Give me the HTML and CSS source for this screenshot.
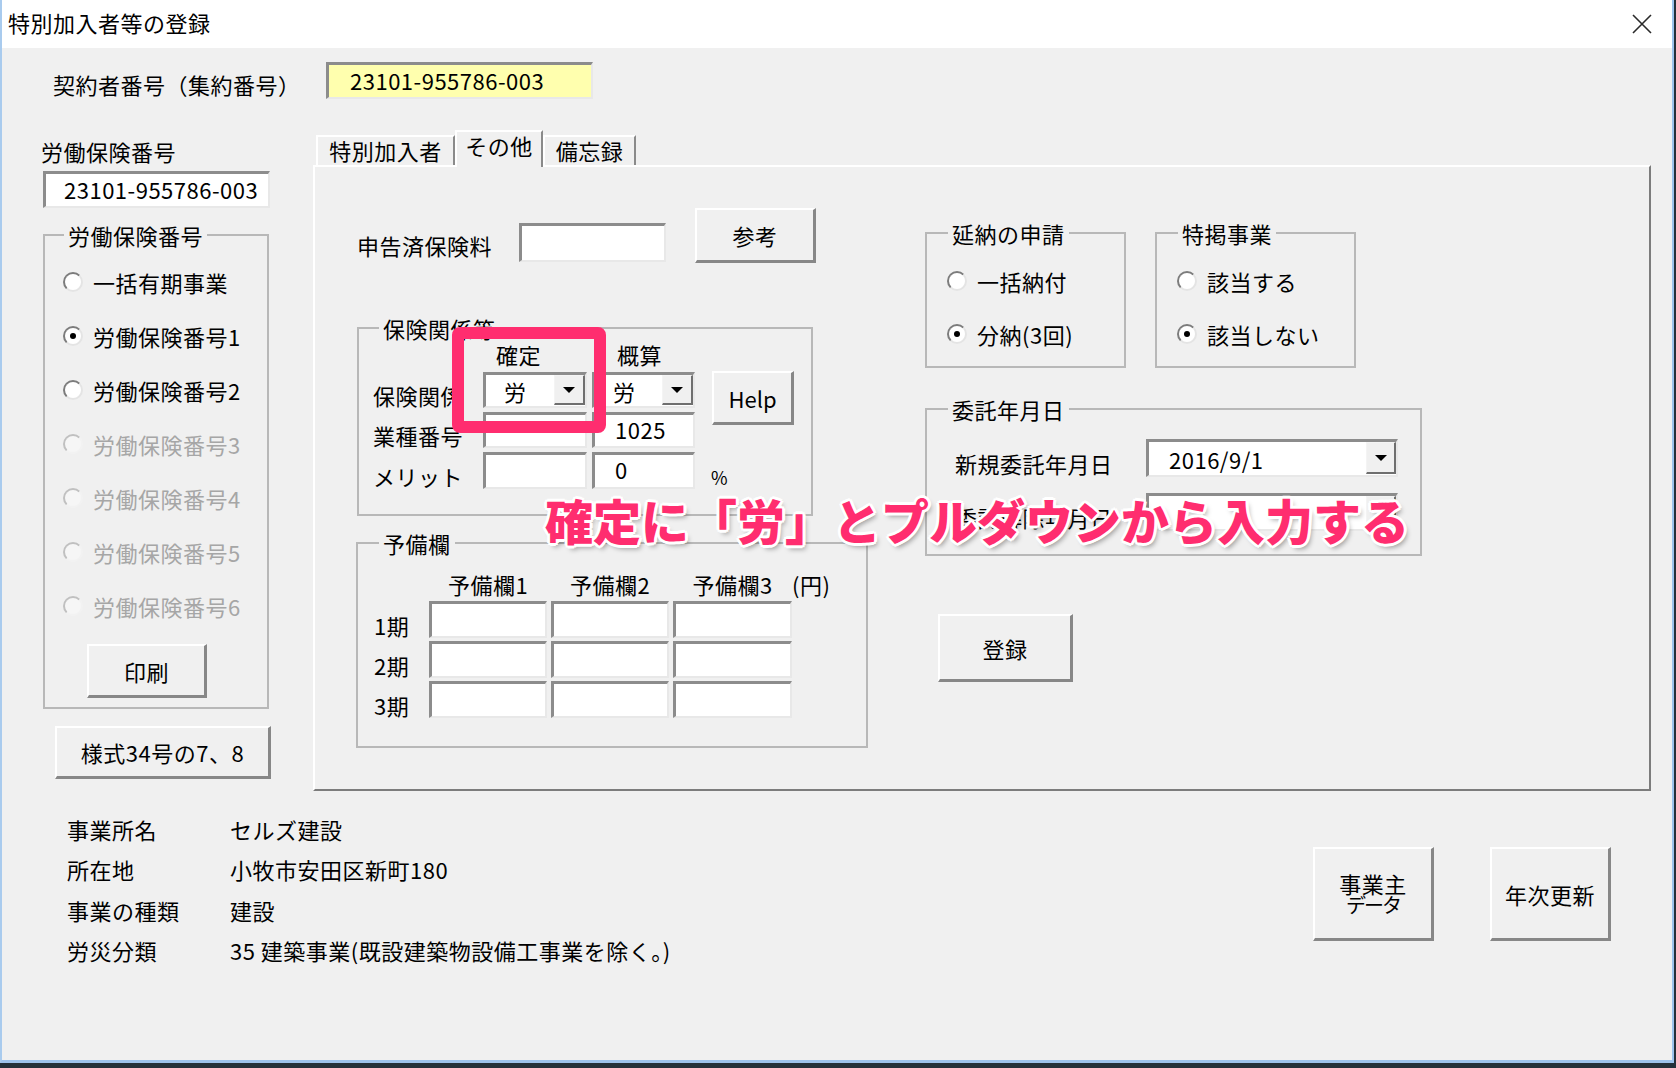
FILE: index.html
```html
<!DOCTYPE html>
<html lang="ja">
<head>
<meta charset="utf-8">
<title>特別加入者等の登録</title>
<link rel="stylesheet" href="styles.css">
</head>
<body>
<div class="window">
  <div class="titlebar">
    <span class="title">特別加入者等の登録</span>
    <svg class="close" width="20" height="20" viewBox="0 0 20 20"><path d="M1 1L19 19M19 1L1 19" stroke="#2a2a2a" stroke-width="1.6" fill="none"/></svg>
  </div>
  <div class="client">
    <div class="contract">
      <span class="contract-label">契約者番号（集約番号）</span>
      <div class="field yellow">23101-955786-003</div>
    </div>

    <div class="main">
      <div class="leftcol">
        <div class="lbl">労働保険番号</div>
        <div class="field ins-no">23101-955786-003</div>
        <fieldset class="group g-ins">
          <legend>労働保険番号</legend>
          <div class="gbody">
            <div class="radio"><span class="rb"></span><span>一括有期事業</span></div>
            <div class="radio"><span class="rb on"></span><span>労働保険番号1</span></div>
            <div class="radio"><span class="rb"></span><span>労働保険番号2</span></div>
            <div class="radio dis"><span class="rb"></span><span>労働保険番号3</span></div>
            <div class="radio dis"><span class="rb"></span><span>労働保険番号4</span></div>
            <div class="radio dis"><span class="rb"></span><span>労働保険番号5</span></div>
            <div class="radio dis"><span class="rb"></span><span>労働保険番号6</span></div>
            <div class="btn print">印刷</div>
          </div>
        </fieldset>
        <div class="btn yoshiki">様式34号の7、8</div>
      </div>

      <div class="tabs">
        <div class="tabstrip">
          <div class="tab t1">特別加入者</div>
          <div class="tab t2 active">その他</div>
          <div class="tab t3">備忘録</div>
        </div>
        <div class="panel">
          <div class="pl">
            <div class="shinkoku">
              <span class="sk-label">申告済保険料</span>
              <div class="field sk-input"></div>
              <div class="btn sk-btn">参考</div>
            </div>

            <fieldset class="group g-hoken">
              <legend>保険関係等</legend>
              <div class="gbody hk-grid">
                <div></div>
                <div class="hk-h1">確定</div>
                <div class="hk-h2">概算</div>
                <div></div>

                <div class="rowlbl">保険関係</div>
                <div class="field combo c1"><span>労</span><span class="ddb"></span></div>
                <div class="field combo c2"><span>労</span><span class="ddb"></span></div>
                <div class="btn help">Help</div>

                <div class="rowlbl">業種番号</div>
                <div class="field c1"></div>
                <div class="field c2 val">1025</div>

                <div class="rowlbl">メリット</div>
                <div class="field c1"></div>
                <div class="field c2 val">0</div>
                <div class="pct">%</div>
              </div>
            </fieldset>

            <fieldset class="group g-yobi">
              <legend>予備欄</legend>
              <div class="gbody yb-grid">
                <div></div>
                <div class="yb-h">予備欄1</div>
                <div class="yb-h">予備欄2</div>
                <div class="yb-h">予備欄3</div>
                <div class="yb-yen">(円)</div>

                <div class="rowlbl">1期</div>
                <div class="field"></div><div class="field"></div><div class="field"></div><div></div>
                <div class="rowlbl">2期</div>
                <div class="field"></div><div class="field"></div><div class="field"></div><div></div>
                <div class="rowlbl">3期</div>
                <div class="field"></div><div class="field"></div><div class="field"></div><div></div>
              </div>
            </fieldset>
          </div>

          <div class="pr">
            <div class="toprow">
              <fieldset class="group g-small">
                <legend>延納の申請</legend>
                <div class="gbody small-body">
                  <div class="radio r53"><span class="rb"></span><span>一括納付</span></div>
                  <div class="radio r53"><span class="rb on"></span><span>分納(3回)</span></div>
                </div>
              </fieldset>
              <fieldset class="group g-small">
                <legend>特掲事業</legend>
                <div class="gbody small-body">
                  <div class="radio r53"><span class="rb"></span><span>該当する</span></div>
                  <div class="radio r53"><span class="rb on"></span><span>該当しない</span></div>
                </div>
              </fieldset>
            </div>

            <fieldset class="group g-itaku">
              <legend>委託年月日</legend>
              <div class="gbody it-grid">
                <div class="rowlbl">新規委託年月日</div>
                <div class="field combo date"><span>2016/9/1</span><span class="ddb"></span></div>
                <div class="rowlbl">委託解除年月日</div>
                <div class="field combo date"><span></span><span class="ddb"></span></div>
              </div>
            </fieldset>

            <div class="btn toroku">登録</div>
          </div>
        </div>
      </div>
    </div>

    <div class="bottom">
      <div class="info">
        <div>事業所名</div><div>セルズ建設</div>
        <div>所在地</div><div>小牧市安田区新町180</div>
        <div>事業の種類</div><div>建設</div>
        <div>労災分類</div><div>35 建築事業(既設建築物設備工事業を除く。)</div>
      </div>
      <div class="bbtns">
        <div class="btn bbtn jig"><span class="l1">事業主</span><span class="l2">データ</span></div>
        <div class="btn bbtn">年次更新</div>
      </div>
    </div>
  </div>

  <div class="hl-box"></div>
  <div class="note">確定に「労」とプルダウンから入力する</div>
</div>
</body>
</html>
```

FILE: styles.css
```css
* { box-sizing: border-box; }
html, body { margin: 0; padding: 0; }
body {
  width: 1676px;
  height: 1068px;
  overflow: hidden;
  background: #24313a;
  font-family: "Noto Sans CJK JP", "Noto Sans", sans-serif;
  font-size: 22px;
  line-height: 24px;
  letter-spacing: 0.5px;
  color: #000;
}

.window {
  position: relative;
  width: 1674px;
  height: 1063px;
  border-left: 2px solid #a9cbee;
  border-right: 2px solid #9dc3ec;
  border-bottom: 3px solid #9dc3ec;
  background: #f0f0f0;
  display: flex;
  flex-direction: column;
}

.titlebar {
  flex: none;
  height: 48px;
  background: #fff;
  display: flex;
  align-items: center;
  justify-content: space-between;
  padding: 0 20px 5px 6px;
}
.close { margin-top: 4px; }

.client {
  flex: 1;
  display: flex;
  flex-direction: column;
  background: #f0f0f0;
}

/* generic controls */
.field {
  background: #fff;
  border-style: solid;
  border-width: 3px 2px 2px 3px;
  border-color: #8c8c8c #e8e8e8 #e8e8e8 #8c8c8c;
}
.btn {
  display: flex;
  align-items: center;
  justify-content: center;
  background: #f0f0f0;
  border-style: solid;
  border-width: 2px 3px 3px 2px;
  border-color: #ffffff #878787 #878787 #ffffff;
}
.group {
  margin: 0;
  padding: 0;
  min-width: 0;
  border: 2px solid #b8b8b8;
}
.group legend {
  padding: 0 4px;
  height: 24px;
  line-height: 24px;
}
.radio {
  display: flex;
  align-items: center;
  gap: 10px;
  height: 54px;
}
.radio.r53 { height: 53px; }
.rb {
  flex: none;
  width: 20px;
  height: 20px;
  border-radius: 50%;
  background: #fff;
  border: 2px solid;
  border-color: #7c7c7c #e4e4e4 #e4e4e4 #7c7c7c;
  display: flex;
  align-items: center;
  justify-content: center;
}
.rb.on::after {
  content: "";
  width: 6px;
  height: 6px;
  border-radius: 50%;
  background: #000;
}
.dis { color: #a6a6a6; }
.dis .rb {
  background: #f6f6f6;
  border-color: #c0c0c0 #f2f2f2 #f2f2f2 #c0c0c0;
}
.combo {
  display: flex;
  align-items: center;
  justify-content: space-between;
}
.ddb {
  align-self: stretch;
  width: 31px;
  margin-bottom: 1px;
  background: #f0f0f0;
  border-style: solid;
  border-width: 1px 2px 2px 1px;
  border-color: #f4f4f4 #6f6f6f #6f6f6f #f4f4f4;
  display: flex;
  align-items: center;
  justify-content: center;
}
.ddb::after {
  content: "";
  border-left: 6px solid transparent;
  border-right: 6px solid transparent;
  border-top: 6px solid #000;
}
.rowlbl {
  align-self: center;
  padding-top: 10px;
  white-space: nowrap;
}

/* contract row */
.contract {
  display: flex;
  align-items: flex-start;
  margin-top: 14px;
  padding-left: 51px;
  height: 37px;
}
.contract-label {
  width: 273px;
  padding-top: 10px;
  white-space: nowrap;
}
.yellow {
  width: 267px;
  height: 37px;
  background: #ffffae;
  padding-left: 21px;
  line-height: 30px;
}

/* main */
.main {
  display: flex;
  margin-top: 31px;
}
.leftcol {
  margin-left: 39px;
  width: 230px;
  padding-top: 9px;
}
.lbl { height: 24px; }
.ins-no {
  margin: 8px 0 0 2px;
  width: 227px;
  height: 37px;
  padding-left: 18px;
  line-height: 30px;
}
.g-ins {
  margin: 15px 0 0 2px;
  width: 226px;
}
.g-ins legend { margin-left: 19px; }
.g-ins .gbody { padding: 8px 0 9px 18px; }
.print {
  margin: 11px 0 0 24px;
  width: 120px;
  height: 54px;
}
.yoshiki {
  margin: 17px 0 0 14px;
  width: 216px;
  height: 53px;
}

/* tabs */
.tabs {
  margin-left: 42px;
  width: 1338px;
  display: flex;
  flex-direction: column;
}
.tabstrip {
  height: 35px;
  display: flex;
  align-items: flex-end;
  padding-left: 3px;
}
.tab {
  height: 30px;
  display: flex;
  align-items: center;
  justify-content: center;
  background: #f0f0f0;
  border-style: solid;
  border-width: 2px 2px 0 2px;
  border-color: #ffffff #8a8a8a transparent #ffffff;
}
.t1 { width: 139px; padding-bottom: 3px; }
.t2 { width: 88px; }
.t3 { width: 93px; padding-bottom: 3px; }
.tab.active {
  height: 37px;
  margin-bottom: -2px;
  position: relative;
  z-index: 1;
  padding-bottom: 10px;
}
.panel {
  height: 626px;
  display: flex;
  padding-left: 41px;
  border-style: solid;
  border-width: 2px;
  border-color: #ffffff #7c7c7c #7c7c7c #ffffff;
}

/* panel left column */
.pl { width: 512px; }
.shinkoku {
  display: flex;
  align-items: flex-start;
  margin-top: 41px;
  padding-left: 1px;
}
.sk-label {
  width: 162px;
  padding-top: 25px;
  white-space: nowrap;
}
.sk-input {
  margin-top: 15px;
  width: 147px;
  height: 39px;
}
.sk-btn {
  margin-left: 29px;
  width: 121px;
  height: 55px;
}

.g-hoken {
  margin: 53px 0 0 1px;
  width: 456px;
}
.g-hoken legend { margin-left: 20px; }
.hk-grid {
  display: grid;
  grid-template-columns: 110px 104px 108px 99px;
  grid-template-rows: 28px 36px 36px 37px;
  row-gap: 4px;
  padding: 0 0 25px 14px;
}
.hk-h1 { padding-left: 13px; align-self: center; }
.hk-h2 { padding-left: 30px; align-self: center; }
.c2 { margin-left: 5px; }
.combo.c1, .combo.c2 { padding-left: 18px; }
.val { padding-left: 20px; line-height: 29px; }
.help {
  grid-row: span 2;
  align-self: start;
  margin: -1px 0 0 17px;
  width: 82px;
  height: 54px;
  letter-spacing: 0;
}
.pct {
  margin-left: 16px;
  align-self: center;
  padding-top: 12px;
  font-size: 18px;
}

.g-yobi {
  margin-top: 15px;
  width: 512px;
}
.g-yobi legend { margin-left: 21px; }
.yb-grid {
  display: grid;
  grid-template-columns: 51px 118px 118px 119px auto;
  grid-template-rows: 29px 37px 37px 37px;
  column-gap: 4px;
  row-gap: 3px;
  padding: 14px 0 28px 16px;
}
.yb-h { text-align: center; align-self: center; }
.yb-yen { margin-left: -4px; align-self: center; white-space: nowrap; }

/* panel right column */
.pr {
  margin-left: 57px;
  width: 497px;
}
.toprow {
  display: flex;
  gap: 29px;
  margin-top: 54px;
}
.g-small { width: 201px; }
.g-small legend { margin-left: 21px; }
.small-body { padding: 9px 0 6px 20px; }

.g-itaku {
  margin-top: 29px;
  width: 497px;
}
.g-itaku legend { margin-left: 21px; }
.it-grid {
  display: grid;
  grid-template-columns: 191px 252px;
  grid-auto-rows: 38px;
  row-gap: 16px;
  padding: 18px 0 23px 28px;
}
.date { padding-left: 20px; }
.date .ddb { width: 30px; }

.toroku {
  margin: 58px 0 0 13px;
  width: 135px;
  height: 68px;
}

/* bottom */
.bottom {
  display: flex;
  align-items: flex-start;
  padding: 0 61px 0 65px;
}
.info {
  margin-top: 18px;
  display: grid;
  grid-template-columns: 163px auto;
  grid-auto-rows: 40.3px;
  align-items: center;
}
.bbtns {
  margin-left: auto;
  margin-top: 56px;
  display: flex;
  gap: 56px;
}
.bbtn {
  width: 121px;
  height: 94px;
}
.jig {
  flex-direction: column;
  line-height: 22px;
}
.jig .l2 {
  letter-spacing: -2px;
  font-size: 20px;
}

/* annotation overlays */
.hl-box {
  position: absolute;
  left: 450px;
  top: 327px;
  width: 154px;
  height: 106px;
  border: 12px solid #ff2d6f;
  border-radius: 8px;
}
.note {
  position: absolute;
  left: 543px;
  top: 495px;
  font-size: 48px;
  line-height: 48px;
  font-weight: 900;
  letter-spacing: 0;
  white-space: nowrap;
  color: #ff2d6f;
  text-shadow:
    3px 0 0 #fff, -3px 0 0 #fff, 0 3px 0 #fff, 0 -3px 0 #fff,
    2px 2px 0 #fff, -2px 2px 0 #fff, 2px -2px 0 #fff, -2px -2px 0 #fff,
    3px 4px 5px rgba(0, 0, 0, 0.35);
}
```
